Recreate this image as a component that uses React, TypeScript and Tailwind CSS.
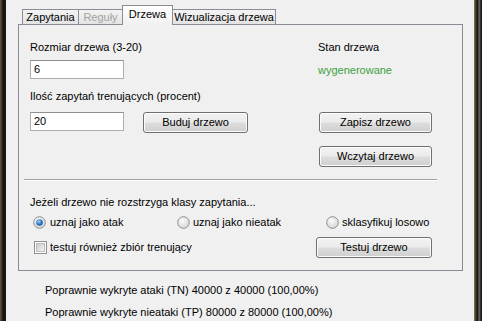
import React from 'react';

const font = { fontFamily: '"Liberation Sans", Arial, sans-serif' };

const Button: React.FC<{ label: string; className?: string }> = ({ label, className = '' }) => (
  <div
    className={`flex items-center justify-center h-[21px] rounded-[3px] border border-[#707070] bg-[linear-gradient(#f2f2f2_0%,#ebebeb_48%,#dddddd_52%,#cfcfcf_100%)] text-[11px] leading-[13px] text-black shadow-[inset_0_0_0_1px_#fcfcfc] ${className}`}
  >
    {label}
  </div>
);

const TextBox: React.FC<{ value: string }> = ({ value }) => (
  <div className="w-[94px] h-[19px] border border-[#abadb3] border-t-[#8e8f8f] bg-white px-[3px] flex items-center text-[11px] leading-[13px] text-black">
    {value}
  </div>
);

const Radio: React.FC<{ checked?: boolean }> = ({ checked }) => (
  <svg width="13" height="13" viewBox="0 0 13 13" className="shrink-0">
    <defs>
      <radialGradient id={checked ? 'rbgc' : 'rbg'} cx="0.4" cy="0.35" r="0.7">
        <stop offset="0" stopColor="#fbfbfb" />
        <stop offset="1" stopColor="#d4d4d4" />
      </radialGradient>
      <radialGradient id="rdot" cx="0.4" cy="0.35" r="0.7">
        <stop offset="0" stopColor="#a6d4f7" />
        <stop offset="0.6" stopColor="#2a78c6" />
        <stop offset="1" stopColor="#164f8c" />
      </radialGradient>
    </defs>
    <circle cx="6.5" cy="6.5" r="5.8" fill={`url(#${checked ? 'rbgc' : 'rbg'})`} stroke="#8e8f8f" strokeWidth="1" />
    {checked && <circle cx="6.5" cy="6.5" r="3.3" fill="url(#rdot)" />}
  </svg>
);

const Checkbox: React.FC = () => (
  <div className="w-[13px] h-[13px] border border-[#8e8f8f] bg-white p-[1px] shrink-0">
    <div className="w-full h-full bg-[linear-gradient(135deg,#cbcbcb,#f4f4f4)] border border-[#bcbcbc]" />
  </div>
);

const Tab: React.FC<{ label: string; width: string; disabled?: boolean }> = ({ label, width, disabled }) => (
  <div
    className={`${width} h-[15px] mb-[1px] -ml-px first:ml-0 border border-b-0 border-[#898c95] bg-[linear-gradient(#f3f3f3,#e3e3e3)] flex items-center justify-center text-[11px] leading-[13px] ${
      disabled ? 'text-[#a3a3a3]' : 'text-black'
    }`}
  >
    {label}
  </div>
);

export default function App() {
  return (
    <div className="w-[482px] h-[321px] flex overflow-hidden bg-[#f0f0f0]" style={font}>
      {/* left window frame */}
      <div className="w-[6px] h-full bg-[linear-gradient(90deg,#6b5c48_0%,#3a3026_30%,#141210_60%,#1e1c1a_100%)]" />

      <div className="flex-1 flex flex-col pt-[5px]">
        {/* tabs */}
        <div className="flex items-end h-[20px] ml-[16px]">
          <Tab label="Zapytania" width="w-[57px]" />
          <Tab label="Reguły" width="w-[45px]" disabled />
          <div className="relative z-10 -ml-px w-[51px] h-[20px] border border-b-0 border-[#898c95] bg-[linear-gradient(#ffffff,#f0f0f0)] flex items-center justify-center text-[11px] leading-[13px] text-black pb-[2px]">
            Drzewa
          </div>
          <Tab label="Wizualizacja drzewa" width="w-[104px]" />
        </div>

        {/* tab page */}
        <div className="-mt-px ml-[12px] w-[445px] h-[247px] border border-[#898c95] bg-[#f0f0f0] px-[11px] flex flex-col text-[11px] leading-[13px] text-black">
          <div className="flex mt-[16px]">
            <div className="w-[288px] flex flex-col">
              <span>Rozmiar drzewa (3-20)</span>
              <div className="mt-[6px]">
                <TextBox value="6" />
              </div>
            </div>
            <div className="flex flex-col">
              <span>Stan drzewa</span>
              <span className="mt-[10px] text-[#3c9f3c]">wygenerowane</span>
            </div>
          </div>

          <span className="mt-[11px]">Ilość zapytań trenujących (procent)</span>

          <div className="flex items-start mt-[9px]">
            <TextBox value="20" />
            <Button label="Buduj drzewo" className="ml-[19px] w-[105px]" />
            <Button label="Zapisz drzewo" className="ml-[71px] w-[113px]" />
          </div>

          <div className="flex mt-[13px]">
            <Button label="Wczytaj drzewo" className="ml-[289px] w-[113px]" />
          </div>

          {/* separator */}
          <div className="mt-[12px] -ml-[6px] w-[413px] h-[2px] border-t border-[#a0a0a0] border-b border-b-white" />

          <span className="mt-[15px]">Jeżeli drzewo nie rozstrzyga klasy zapytania...</span>

          <div className="flex items-center mt-[6px] h-[14px]">
            <div className="flex items-center gap-[4px] ml-[3px] w-[144px]">
              <Radio checked />
              <span>uznaj jako atak</span>
            </div>
            <div className="flex items-center gap-[3px] w-[149px]">
              <Radio />
              <span>uznaj jako nieatak</span>
            </div>
            <div className="flex items-center gap-[3px]">
              <Radio />
              <span>sklasyfikuj losowo</span>
            </div>
          </div>

          <div className="flex items-center mt-[8px] h-[21px]">
            <div className="flex items-center gap-[3px] ml-[4px] w-[282px]">
              <Checkbox />
              <span>testuj również zbiór trenujący</span>
            </div>
            <Button label="Testuj drzewo" className="w-[116px]" />
          </div>
        </div>

        {/* results */}
        <div className="flex flex-col pl-[39px] mt-[13px] gap-[9px] text-[11px] leading-[13px] text-black">
          <span>Poprawnie wykryte ataki (TN) 40000 z 40000 (100,00%)</span>
          <span>Poprawnie wykryte nieataki (TP) 80000 z 80000 (100,00%)</span>
        </div>
      </div>

      {/* right window frame */}
      <div className="w-[8px] h-full bg-[linear-gradient(90deg,#8a7a52_0%,#3a3126_25%,#1a1712_45%,#6e6a64_65%,#2a2622_85%,#121110_100%)]" />
    </div>
  );
}
